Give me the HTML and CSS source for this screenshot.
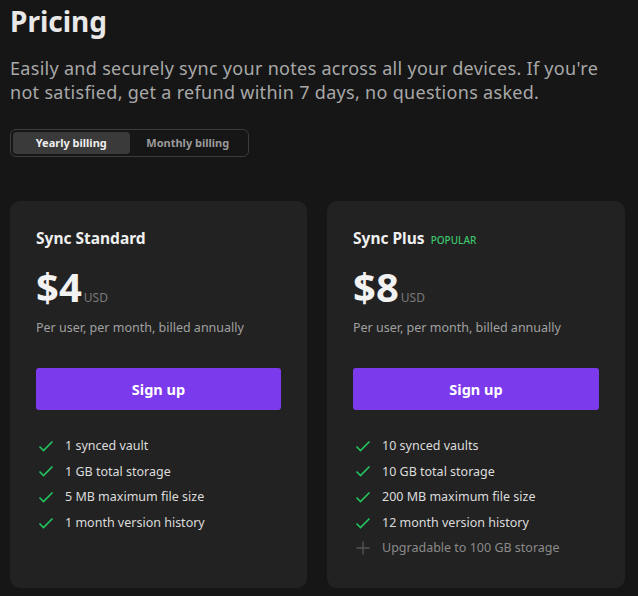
FILE: index.html
```html
<!DOCTYPE html>
<html lang="en">
<head>
<meta charset="utf-8">
<link rel="stylesheet" href="styles.css">
</head>
<body>
<div class="page">
  <h1 class="title">Pricing</h1>
  <p class="subtitle">Easily and securely sync your notes across all your devices. If you're not satisfied, get a refund within 7 days, no questions asked.</p>
  <div class="toggle">
    <span class="toggle-opt active">Yearly billing</span>
    <span class="toggle-opt">Monthly billing</span>
  </div>
  <div class="cards">
    <div class="card">
      <div class="card-title">Sync Standard</div>
      <div class="price"><span class="amount">$4</span><span class="cur">USD</span></div>
      <div class="per">Per user, per month, billed annually</div>
      <button class="btn">Sign up</button>
      <ul class="features">
        <li><svg class="ic" viewBox="0 0 16 16"><path d="M1.5 8.5l4 4 9-9" fill="none" stroke="#22c55e" stroke-width="1.6"/></svg>1 synced vault</li>
        <li><svg class="ic" viewBox="0 0 16 16"><path d="M1.5 8.5l4 4 9-9" fill="none" stroke="#22c55e" stroke-width="1.6"/></svg>1 GB total storage</li>
        <li><svg class="ic" viewBox="0 0 16 16"><path d="M1.5 8.5l4 4 9-9" fill="none" stroke="#22c55e" stroke-width="1.6"/></svg>5 MB maximum file size</li>
        <li><svg class="ic" viewBox="0 0 16 16"><path d="M1.5 8.5l4 4 9-9" fill="none" stroke="#22c55e" stroke-width="1.6"/></svg>1 month version history</li>
      </ul>
    </div>
    <div class="card">
      <div class="card-title">Sync Plus <span class="badge">POPULAR</span></div>
      <div class="price"><span class="amount">$8</span><span class="cur">USD</span></div>
      <div class="per">Per user, per month, billed annually</div>
      <button class="btn">Sign up</button>
      <ul class="features">
        <li><svg class="ic" viewBox="0 0 16 16"><path d="M1.5 8.5l4 4 9-9" fill="none" stroke="#22c55e" stroke-width="1.6"/></svg>10 synced vaults</li>
        <li><svg class="ic" viewBox="0 0 16 16"><path d="M1.5 8.5l4 4 9-9" fill="none" stroke="#22c55e" stroke-width="1.6"/></svg>10 GB total storage</li>
        <li><svg class="ic" viewBox="0 0 16 16"><path d="M1.5 8.5l4 4 9-9" fill="none" stroke="#22c55e" stroke-width="1.6"/></svg>200 MB maximum file size</li>
        <li><svg class="ic" viewBox="0 0 16 16"><path d="M1.5 8.5l4 4 9-9" fill="none" stroke="#22c55e" stroke-width="1.6"/></svg>12 month version history</li>
        <li class="muted"><svg class="ic" viewBox="0 0 16 16"><path d="M8 1.5v13M1.5 8h13" fill="none" stroke="#555" stroke-width="1.3"/></svg>Upgradable to 100 GB storage</li>
      </ul>
    </div>
  </div>
</div>
</body>
</html>
```
FILE: styles.css
```css
html, body {
  margin: 0;
  background: #161616;
}
body {
  font-family: "Noto Sans", "Noto Sans CJK KR", sans-serif;
  color: #dadada;
}
.page {
  width: 615px;
  padding: 0 0 0 10px;
}
.title {
  margin: 0;
  padding-top: 2px;
  font-size: 28px;
  line-height: 38px;
  font-weight: 700;
  color: #e8e8e8;
}
.subtitle {
  margin: 16px 0 0;
  font-size: 18px;
  letter-spacing: 0.3px;
  line-height: 24px;
  color: #a8a8a8;
}
.toggle {
  margin-top: 25px;
  display: inline-flex;
  border: 1px solid #3c3c3c;
  border-radius: 6px;
  padding: 2px;
  width: 233px;
}
.toggle-opt {
  flex: 1;
  text-align: center;
  font-size: 11px;
  font-weight: 700;
  line-height: 22px;
  color: #9a9a9a;
  border-radius: 4px;
}
.toggle-opt.active {
  background: #3a3a3a;
  color: #eeeeee;
}
.cards {
  margin-top: 44px;
  display: grid;
  grid-template-columns: 297px 298px;
  gap: 20px;
}
.card {
  background: #222222;
  border-radius: 10px;
  padding: 26px 26px 40px;
  height: 387px;
  box-sizing: border-box;
}
.card-title {
  font-size: 15.5px;
  font-weight: 700;
  color: #f0f0f0;
  line-height: 23px;
  height: 23px;
}
.badge {
  font-size: 10px;
  font-weight: 500;
  line-height: 10px;
  color: #3ec46d;
  margin-left: 2px;
}
.price {
  margin-top: 13px;
  display: flex;
  align-items: baseline;
}
.amount {
  font-size: 40px;
  font-weight: 700;
  color: #f2f2f2;
  line-height: 48px;
}
.cur {
  font-size: 12px;
  color: #7a7a7a;
  margin-left: 2px;
}
.per {
  margin-top: 8px;
  font-size: 12.5px;
  color: #a0a0a0;
  line-height: 18px;
}
.btn {
  display: block;
  margin-top: 31px;
  width: 100%;
  height: 42px;
  border: 0;
  border-radius: 3px;
  background: #7c3aed;
  color: #ffffff;
  font-family: inherit;
  font-size: 14.5px;
  font-weight: 700;
}
.features {
  list-style: none;
  margin: 23px 0 0;
  padding: 0;
}
.features li {
  display: flex;
  align-items: center;
  font-size: 12.5px;
  line-height: 25.6px;
  color: #dcdcdc;
}
.features li.muted {
  color: #8a8a8a;
}
.ic {
  width: 16px;
  height: 16px;
  margin: 0 11px 0 2px;
  flex: none;
}
```
